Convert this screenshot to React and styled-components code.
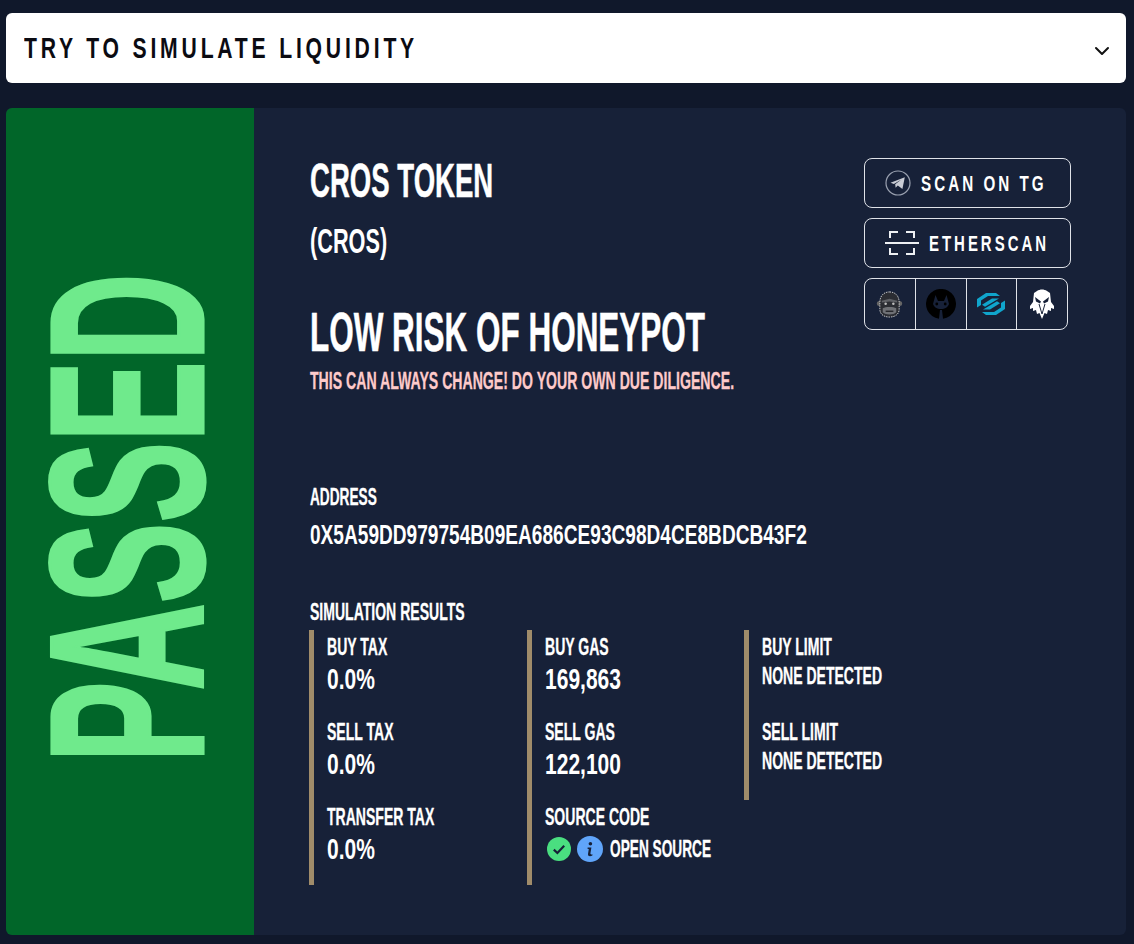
import React from "react";
import styled, { createGlobalStyle } from "styled-components";
import { ChevronDown } from "lucide-react";

const Global = createGlobalStyle`
  html, body { margin: 0; padding: 0; background: #10182b; }
  #root { width: 1134px; height: 944px; overflow: hidden; }
  svg { flex: none; }
`;

const narrow = `font-family: "Liberation Sans", Arial, sans-serif; font-weight: 700; color: #fff; white-space: nowrap; transform-origin: left center;`;

const Page = styled.div`
  padding: 13px 8px 9px 6px;
  display: flex;
  flex-direction: column;
  gap: 25px;
`;
const SelectBar = styled.div`
  height: 70px;
  background: #fff;
  border-radius: 6px;
  display: flex;
  align-items: center;
  justify-content: space-between;
  padding: 0 12px 0 18px;
`;
const SelectText = styled.span`
  ${narrow}
  color: #0b0b12;
  font-size: 30px;
  letter-spacing: 5.4px;
  transform: scaleX(.705);
`;
const Chevron = styled(ChevronDown)`
  margin-top: 6px;
`;
const Card = styled.div`
  height: 827px;
  display: flex;
  background: #172138;
  border-radius: 6px;
`;
const Side = styled.div`
  width: 248px;
  background: #016629;
  border-radius: 6px 0 0 6px;
  display: flex;
  align-items: center;
  justify-content: center;
`;
const Passed = styled.div`
  ${narrow}
  color: #6fea8c;
  font-size: 100px;
  line-height: 1;
  -webkit-text-stroke: 1.4px #6fea8c;
  transform-origin: center;
  transform: rotate(-90deg) scale(1.21, 2.19);
  position: relative;
  top: -4px;
  left: -4px;
`;
const Main = styled.div`
  flex: 1;
  padding: 50px 55px 0 56px;
  display: flex;
  flex-direction: column;
`;
const Head = styled.div`
  display: flex;
  justify-content: space-between;
  height: 235px;
`;
const Titles = styled.div`
  width: 500px;
`;
const Title = styled.div`
  ${narrow}
  font-size: 49px;
  line-height: 44px;
  -webkit-text-stroke: .5px #fff;
  transform: scaleX(.5625);
`;
const Symbol = styled.div`
  ${narrow}
  font-size: 35px;
  line-height: 30px;
  margin-top: 24px;
  transform: scaleX(.62);
`;
const Risk = styled.div`
  ${narrow}
  font-size: 55px;
  line-height: 54px;
  margin-top: 49px;
  -webkit-text-stroke: .5px #fff;
  transform: scaleX(.572);
`;
const Warn = styled.div`
  ${narrow}
  color: #fecaca;
  font-size: 23px;
  line-height: 24px;
  margin-top: 10px;
  -webkit-text-stroke: .3px #fecaca;
  transform: scaleX(.613);
`;
const Links = styled.div`
  display: flex;
  flex-direction: column;
  gap: 10px;
  align-items: flex-start;
`;
const LinkButton = styled.div`
  width: 207px;
  height: 50px;
  box-sizing: border-box;
  border: 1px solid #dfe2e8;
  border-radius: 8px;
  display: flex;
  align-items: center;
  padding-left: 20px;
  gap: 10px;
`;
const LinkText = styled.span`
  ${narrow}
  font-size: 22px;
  letter-spacing: 4.4px;
  padding-top: 2px;
  transform: scaleX(${(p) => p.$stretch});
`;
const IconRow = styled.div`
  width: 204px;
  height: 52px;
  box-sizing: border-box;
  border: 1px solid #dfe2e8;
  border-radius: 8px;
  display: flex;
`;
const IconCell = styled.div`
  flex: 1;
  display: flex;
  align-items: center;
  justify-content: center;
  border-left: ${(p) => (p.$first ? "0" : "1px solid #dfe2e8")};
`;
const SmallLabel = styled.div`
  ${narrow}
  font-size: 23px;
  line-height: 20px;
  -webkit-text-stroke: .3px #fff;
  transform: scaleX(.61);
`;
const AddressLabel = styled(SmallLabel)`
  margin-top: 94px;
  transform: scaleX(.594);
`;
const Address = styled.div`
  ${narrow}
  font-size: 28px;
  line-height: 28px;
  margin-top: 14px;
  transform: scaleX(.682);
`;
const SimLabel = styled(SmallLabel)`
  margin-top: 53px;
`;
const Grid = styled.div`
  margin-top: 8px;
  display: grid;
  grid-template-columns: repeat(3, 217.5px);
  align-items: start;
`;
const Col = styled.div`
  border-left: 5px solid #a08c6a;
  padding-left: 13px;
  margin-left: -1px;
`;
const Item = styled.div`
  height: 85px;
  box-sizing: border-box;
  padding-top: 7px;
`;
const Value = styled.div`
  ${narrow}
  font-size: 29px;
  line-height: 28px;
  margin-top: 8px;
  transform: scaleX(.725);
`;
const Plain = styled(SmallLabel)`
  margin-top: 9px;
`;
const SourceRow = styled.div`
  display: flex;
  align-items: center;
  gap: 6px;
  margin-top: 8px;
  height: 28px;
  margin-left: 2px;
`;
const SourceText = styled(SmallLabel)`
  margin-left: 1px;
  transform: scaleX(.595);
`;

const Telegram = () => (
  <svg width="26" height="26" viewBox="0 0 26 26">
    <circle cx="13" cy="13" r="12" fill="none" stroke="#9aa1b0" strokeWidth="1.2" />
    <path d="M5.5 12.8 19.8 7.2 17.4 19 12.8 15.6 10.6 17.8 10.2 14.2 16.4 9.6 8.9 13.9Z" fill="#c9ccd4" />
  </svg>
);
const Scan = () => (
  <svg width="34" height="26" viewBox="0 0 34 26" fill="none" stroke="#eef0f3" strokeWidth="2">
    <path d="M5 8V2H13M21 2H29V8M5 18V24H13M21 24H29V18" />
    <path d="M0 13H34" />
  </svg>
);
const Gorilla = () => (
  <svg width="27" height="29" viewBox="0 0 28 30">
    <circle cx="3.5" cy="14" r="2.6" fill="#666" />
    <circle cx="24.5" cy="14" r="2.6" fill="#666" />
    <path d="M14 2C20 2 24 6 24 13V20C24 25 20 28 14 28S4 25 4 20V13C4 6 8 2 14 2Z" fill="#2b2d33" stroke="#cfcfcf" strokeWidth="1" strokeDasharray="1.5 1" />
    <path d="M6 11 14 9 22 11V13L14 12 6 13Z" fill="#5f6166" />
    <circle cx="10" cy="14.2" r="1.3" fill="#bdbdbd" />
    <circle cx="18" cy="14.2" r="1.3" fill="#bdbdbd" />
    <path d="M7 19C10 17 18 17 21 19V23C18 26 10 26 7 23Z" fill="#6f7176" />
    <path d="M10 22H18" stroke="#1c1d20" strokeWidth="1.3" />
  </svg>
);
const Cat = () => (
  <svg width="30" height="30" viewBox="0 0 30 30">
    <path d="M13 29.8A15 15 0 1 1 17 29.8L16 21H14Z" fill="#000" />
    <path d="M9.5 6 12 12H18L20.5 6 23 15C22 18 19 20 15 20S8 18 7 15Z" fill="#172138" />
    <circle cx="10.8" cy="15" r="1.4" fill="#000" />
    <circle cx="19.2" cy="15" r="1.4" fill="#000" />
  </svg>
);
const Teal = () => (
  <svg width="28" height="24" viewBox="0 0 28 24" fill="#10a5cc">
    <path d="M0 7 9 1H19L23 4H11L4 8.5V13L0 15.5Z" />
    <path d="M28 17 19 23H9L5 20H17L24 15.5V11L28 8.5Z" />
    <path d="M22 6.5H15L5 12.7 8 14.8Z" />
    <path d="M20 9.2 23 11.3 13 17.5H6Z" />
  </svg>
);
const Eagle = () => (
  <svg width="26" height="30" viewBox="0 0 26 30">
    <path d="M5 4 8 2C11 0 15 0 18 2L21 4 22 13 25 17V20L22 19V22L19 21 18 25 15.5 24 13 30 10.5 24 8 25 7 21 4 22V19L1 20V17L4 13Z" fill="#fff" />
    <path d="M6 8 12 12.5 11 14.5 7 12.5ZM20 8 14 12.5 15 14.5 19 12.5Z" fill="#172138" />
    <path d="M10 15 13 25 16 15" fill="none" stroke="#172138" strokeWidth="1" />
  </svg>
);
const Check = () => (
  <svg width="24" height="24" viewBox="0 0 24 24">
    <circle cx="12" cy="12" r="12" fill="#4ade80" />
    <path d="M6.8 12.6 10.4 16 17.2 8.8" fill="none" stroke="#172138" strokeWidth="2.2" />
  </svg>
);
const Info = () => (
  <svg width="26" height="26" viewBox="0 0 26 26">
    <circle cx="13" cy="13" r="13" fill="#60a5fa" />
    <circle cx="13.4" cy="7.8" r="1.8" fill="#172138" />
    <path d="M10.6 11.6H14.4L13.4 17.6C13.3 18.4 14 18.6 15.4 18.2V19.6C13 20.6 10.8 20.4 11 18L11.8 13H10.6Z" fill="#172138" />
  </svg>
);

const Stat = ({ label, value }) => (
  <Item>
    <SmallLabel>{label}</SmallLabel>
    <Value>{value}</Value>
  </Item>
);
const Limit = ({ label, value }) => (
  <Item>
    <SmallLabel>{label}</SmallLabel>
    <Plain>{value}</Plain>
  </Item>
);

export default function App() {
  return (
    <Page>
      <Global />
      <SelectBar>
        <SelectText>TRY TO SIMULATE LIQUIDITY</SelectText>
        <Chevron size={24} color="#111" strokeWidth={2} />
      </SelectBar>
      <Card>
        <Side>
          <Passed>PASSED</Passed>
        </Side>
        <Main>
          <Head>
            <Titles>
              <Title>CROS TOKEN</Title>
              <Symbol>(CROS)</Symbol>
              <Risk>LOW RISK OF HONEYPOT</Risk>
              <Warn>THIS CAN ALWAYS CHANGE! DO YOUR OWN DUE DILIGENCE.</Warn>
            </Titles>
            <Links>
              <LinkButton><Telegram /><LinkText $stretch={0.69}>SCAN ON TG</LinkText></LinkButton>
              <LinkButton><Scan /><LinkText $stretch={0.68}>ETHERSCAN</LinkText></LinkButton>
              <IconRow>
                <IconCell $first><Gorilla /></IconCell>
                <IconCell><Cat /></IconCell>
                <IconCell><Teal /></IconCell>
                <IconCell><Eagle /></IconCell>
              </IconRow>
            </Links>
          </Head>
          <AddressLabel>ADDRESS</AddressLabel>
          <Address>0X5A59DD979754B09EA686CE93C98D4CE8BDCB43F2</Address>
          <SimLabel>SIMULATION RESULTS</SimLabel>
          <Grid>
            <Col>
              <Stat label="BUY TAX" value="0.0%" />
              <Stat label="SELL TAX" value="0.0%" />
              <Stat label="TRANSFER TAX" value="0.0%" />
            </Col>
            <Col>
              <Stat label="BUY GAS" value="169,863" />
              <Stat label="SELL GAS" value="122,100" />
              <Item>
                <SmallLabel>SOURCE CODE</SmallLabel>
                <SourceRow>
                  <Check /><Info />
                  <SourceText>OPEN SOURCE</SourceText>
                </SourceRow>
              </Item>
            </Col>
            <Col>
              <Limit label="BUY LIMIT" value="NONE DETECTED" />
              <Limit label="SELL LIMIT" value="NONE DETECTED" />
            </Col>
          </Grid>
        </Main>
      </Card>
    </Page>
  );
}
